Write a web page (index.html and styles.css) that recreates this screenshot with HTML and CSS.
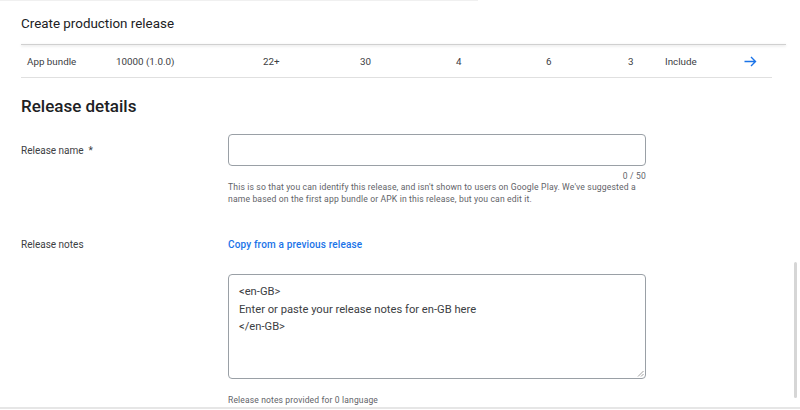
FILE: index.html
```html
<!DOCTYPE html>
<html lang="en">
    <head>
        <meta charset="utf-8">
        <link rel="stylesheet" href="styles.css">
    </head>
    <body>
        <div class="top-edge"></div>
        <div class="content">
            <h2 class="page-title">Create production release</h2>
            <section class="bundles">
                <div class="bundles-head"></div>
                <div class="bundle-row">
                    <span>App bundle</span>
                    <span>10000 (1.0.0)</span>
                    <span>22+</span>
                    <span>30</span>
                    <span>4</span>
                    <span>6</span>
                    <span>3</span>
                    <span>Include</span>
                    <span class="arrow">
                        <svg width="13" height="11" viewBox="0 0 13 11">
                            <path d="M0.5 5.5H11.5M7 1L11.5 5.5L7 10" fill="none" stroke="#1a73e8" stroke-width="1.4"/>
                        </svg>
                    </span>
                </div>
            </section>

            <h1 class="section-title">Release details</h1>

            <div class="form-row">
                <label class="field-label">Release name&nbsp; *</label>
                <div class="field">
                    <div class="text-input"></div>
                    <div class="counter">0 / 50</div>
                    <div class="hint">
                        This is so that you can identify this release, and isn't shown to users on Google Play. We've suggested a
                        name based on the first app bundle or APK in this release, but you can edit it.
                    </div>
                </div>
            </div>

            <div class="form-row notes-row">
                <label class="field-label">Release notes</label>
                <div class="field">
                    <a class="link" href="#">Copy from a previous release</a>
                    <div class="text-area">
                        &lt;en-GB&gt;<br/>
                        Enter or paste your release notes for en-GB here<br/>
                        &lt;/en-GB&gt;
                        <svg class="grip" width="7" height="7" viewBox="0 0 7 7">
                            <path d="M6.5 1L1 6.5M6.5 4L4 6.5" stroke="#888" stroke-width="0.8"/>
                        </svg>
                    </div>
                    <div class="notes-count">Release notes provided for 0 language</div>
                </div>
            </div>
        </div>
        <div class="scrollbar"></div>
        <div class="bottom-edge"></div>
    </body>
</html>
```

FILE: styles.css
```css
* {
    box-sizing: border-box;
}

html, body {
    height: 100%;
}

body {
    margin: 0;
    background-color: #ffffff;
    font-family: Roboto, "Noto Sans", Arial, sans-serif;
    color: #202124;
    position: relative;
    overflow: hidden;
}

.top-edge {
    width: 478px;
    height: 1px;
    background-color: #f0f0f0;
}

.content {
    padding-left: 21px;
}

.page-title {
    margin: 0;
    padding-top: 14px;
    height: 43px;
    font-size: 13.4px;
    font-weight: 400;
    line-height: 18px;
    color: #202124;
}

.bundles-head {
    width: 765px;
    height: 1px;
    background-color: #d0d0d0;
    box-shadow: 0 1px 3px rgba(0, 0, 0, 0.18);
}

.bundle-row {
    width: 751px;
    height: 33px;
    padding-left: 6px;
    display: grid;
    grid-template-columns: 89px 147px 97px 96px 90px 82px 37px 79px auto;
    align-items: center;
    font-size: 9.8px;
    color: #3c4043;
    border-bottom: 1px solid #e0e0e0;
}

.arrow svg {
    display: block;
}

.section-title {
    margin: 0;
    padding-top: 17px;
    height: 56px;
    font-size: 17px;
    font-weight: 500;
    line-height: 22px;
    color: #202124;
}

.form-row {
    display: grid;
    grid-template-columns: 207px 418px;
}

.field-label {
    font-size: 10px;
    color: #3c4043;
    line-height: 32px;
    padding-top: 1px;
}

.text-input {
    height: 32px;
    border: 1px solid #9aa0a6;
    border-radius: 4px;
}

.counter {
    text-align: right;
    font-size: 8.5px;
    color: #5f6368;
    line-height: 12px;
    margin-top: 4px;
    letter-spacing: 0.2px;
}

.hint {
    max-width: 408px;
    font-size: 8.6px;
    color: #5f6368;
    line-height: 12px;
    margin-top: -1px;
    letter-spacing: 0.15px;
}

.notes-row {
    margin-top: 31px;
}

.notes-row .field-label {
    line-height: 18px;
    padding-top: 0;
}

.link {
    display: block;
    font-size: 10px;
    font-weight: 500;
    color: #1a73e8;
    text-decoration: none;
    line-height: 18px;
    letter-spacing: 0.15px;
}

.text-area {
    position: relative;
    margin-top: 20px;
    height: 105px;
    border: 1px solid #9aa0a6;
    border-radius: 4px;
    padding: 8px 10px;
    font-size: 11.2px;
    line-height: 17.5px;
    color: #3c4043;
}

.grip {
    position: absolute;
    right: 1px;
    bottom: 1px;
}

.notes-count {
    margin-top: 15px;
    font-size: 8.5px;
    color: #5f6368;
    line-height: 12px;
    letter-spacing: 0.15px;
}

.scrollbar {
    position: absolute;
    left: 794px;
    top: 262px;
    width: 3px;
    height: 136px;
    background-color: #d6d6d6;
    border-radius: 2px;
}

.bottom-edge {
    position: absolute;
    left: 0;
    top: 407px;
    width: 100%;
    height: 2px;
    background-color: #e6e6e6;
}
```
